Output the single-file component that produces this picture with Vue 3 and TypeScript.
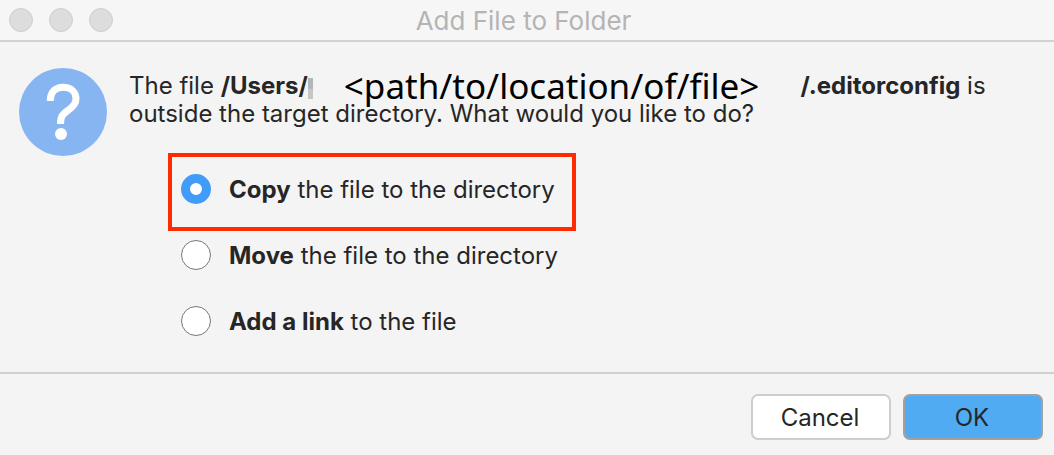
<script setup lang="ts">
import { ref } from 'vue'

interface Option {
  value: string
  strong: string
  rest: string
}

const options: Option[] = [
  { value: 'copy', strong: 'Copy', rest: ' the file to the directory' },
  { value: 'move', strong: 'Move', rest: ' the file to the directory' },
  { value: 'link', strong: 'Add a link', rest: ' to the file' },
]

const choice = ref('copy')
const highlighted = 'copy'
</script>

<template>
  <main class="dialog">
    <header class="titlebar">
      <div class="lights">
        <i class="light"></i>
        <i class="light"></i>
        <i class="light"></i>
      </div>
      <h1 class="title">Add File to Folder</h1>
    </header>

    <section class="content">
      <svg class="icon" viewBox="0 0 88 88" aria-hidden="true">
        <circle cx="44" cy="44" r="44" fill="#87b5f1" />
        <path
          d="M31.200 33C31.200 24.500 36 19.300 44 19.300C52 19.300 57 24 57 30.800C57 35.500 54.500 38.500 49.500 42C43.500 46 41.500 48.500 41.500 56"
          fill="none"
          stroke="#fff"
          stroke-width="7"
        />
        <circle cx="42" cy="66" r="6" fill="#fff" />
      </svg>

      <div class="main">
        <div class="message">
          <p class="line">
            <span>The file <b>/Users/</b></span>
            <i class="smudge"></i>
            <span class="path">&lt;path/to/location/of/file&gt;</span>
            <span class="tail"><b>/.editorconfig</b> is</span>
          </p>
          <p class="line">outside the target directory. What would you like to do?</p>
        </div>

        <div class="options" role="radiogroup" aria-label="Action">
          <label
            v-for="o in options"
            :key="o.value"
            class="option"
            :class="{ marked: o.value === highlighted }"
          >
            <input v-model="choice" class="radio" type="radio" name="action" :value="o.value" />
            <span class="text"><b>{{ o.strong }}</b>{{ o.rest }}</span>
          </label>
        </div>
      </div>
    </section>

    <footer class="footer">
      <button class="button" type="button">Cancel</button>
      <button class="button primary" type="button">OK</button>
    </footer>
  </main>
</template>

<style>
body {
  background: #f4f4f4;
}
</style>

<style scoped>
.dialog {
  color: #262626;
  font-family: Inter, "Liberation Sans", sans-serif;
  font-size: 24px;
  line-height: 28px;
}

.titlebar {
  display: grid;
  grid-template-columns: 1fr auto 1fr;
  align-items: center;
  height: 40px;
  padding: 0 16px 0 9px;
  background: #f6f6f6;
  border-bottom: 2px solid #d2d2d2;
}

.lights {
  display: flex;
  gap: 16px;
}

.light {
  box-sizing: border-box;
  width: 24px;
  height: 24px;
  border: 1px solid #cecece;
  border-radius: 50%;
  background: #dddddd;
}

.title {
  margin: 0;
  padding-top: 2px;
  color: #b4b4b4;
  font-size: 26px;
  font-weight: 400;
}

.content {
  display: flex;
  gap: 22px;
  padding: 26px 19px 18px;
}

.icon {
  flex: none;
  width: 88px;
  height: 88px;
}

.main {
  flex: 1;
  padding-top: 4px;
}

.line {
  display: flex;
  align-items: center;
  height: 28px;
  margin: 0;
  white-space: nowrap;
}

.smudge {
  width: 5px;
  height: 21px;
  margin-top: 4px;
  background: linear-gradient(#b5b5b5 50%, #c6c6c6 50%);
}

.path {
  margin-left: 31px;
  color: #000;
  font-family: "Noto Sans", "Open Sans", sans-serif;
  font-size: 35px;
}

.tail {
  margin-left: 41px;
}

b {
  font-weight: 700;
}

.options {
  display: flex;
  flex-direction: column;
  align-items: flex-start;
  padding: 28px 0 0 52px;
}

.option {
  position: relative;
  display: flex;
  align-items: center;
  gap: 18px;
  height: 66px;
}

.text {
  padding-top: 2px;
}

.marked::after {
  content: "";
  position: absolute;
  inset: -3px -21px -9px -13px;
  border: 4px solid #ff2a00;
}

.radio {
  appearance: none;
  box-sizing: border-box;
  width: 30px;
  height: 30px;
  margin: 0;
  border: 1px solid #777;
  border-radius: 50%;
  background: #fff;
}

.radio:checked {
  border: 9px solid #419bf9;
}

.footer {
  display: flex;
  justify-content: flex-end;
  gap: 12px;
  padding: 20px 11px 15px;
  border-top: 2px solid #d0d0d0;
}

.button {
  box-sizing: border-box;
  width: 140px;
  height: 46px;
  padding: 2px 2px 0 0;
  border: 2px solid #cdcdcd;
  border-radius: 7px;
  background: #fff;
  color: #262626;
  font: inherit;
}

.primary {
  border-color: #a1a1a1;
  background: #50abf3;
}
</style>
